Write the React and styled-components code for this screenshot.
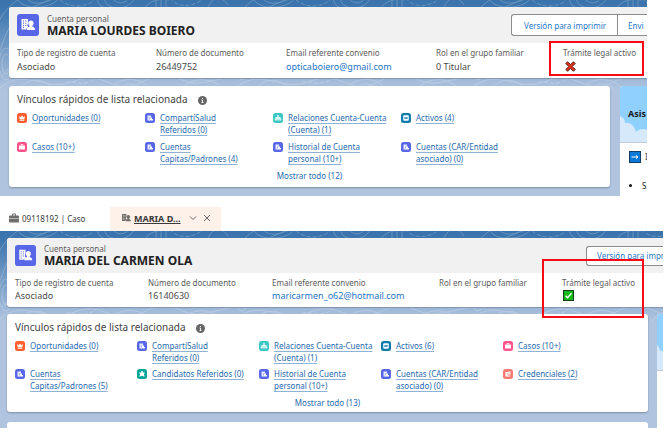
import React from "react";
import styled, { createGlobalStyle } from "styled-components";

const GlobalStyle = createGlobalStyle`
  *, *::before, *::after { box-sizing: border-box; }
  body {
    margin: 0;
    background: #fff;
    font-family: "Noto Sans", "Open Sans", sans-serif;
    font-size: 9px;
    color: #4a4a4a;
  }
`;

const Page = styled.main`
  display: flex;
  flex-direction: column;
`;

const Workspace = styled.section`
  position: relative;
  isolation: isolate;
  overflow: hidden;
  display: flex;
  flex-direction: column;
  gap: ${(p) => (p.$compact ? 7 : 8)}px;
  margin-right: ${(p) => (p.$compact ? 2 : 18)}px;
  padding: 7px 0 0 ${(p) => (p.$compact ? 7 : 9)}px;
  background: linear-gradient(#3a73ac 0, #3f77af 10px, #b0c4df 90px);
`;

const Contours = styled.svg`
  position: absolute;
  inset: 0;
  z-index: -1;
  width: 100%;
  height: 100px;
  fill: none;
  stroke: #fff;
  opacity: 0.22;
`;

const RecordCard = styled.article`
  border-radius: 3px 0 0 3px;
  background: #fff;
  box-shadow: 0 1px 1px #8195b0;
`;

const RecordHeader = styled.header`
  display: flex;
  align-items: center;
  gap: 8px;
  min-height: ${(p) => (p.$compact ? 35 : 36)}px;
  padding-left: 8px;
  border-radius: 3px 0 0 0;
  background: #f1f1f1;
`;

const Heading = styled.div`
  flex: 1;
  min-width: 0;
`;

const Eyebrow = styled.p`
  margin: 0;
  font-size: 8px;
  line-height: 11px;
  color: #5c5c5c;
  white-space: nowrap;
`;

const RecordName = styled.h1`
  margin: 0;
  font-size: 12px;
  line-height: 14px;
  font-weight: 700;
  color: #222;
  white-space: nowrap;
`;

const Actions = styled.div`
  display: flex;
  flex: none;
  overflow: hidden;
  width: ${(p) => (p.$compact ? 77 : 136)}px;
  border: 1px solid #8c8c8c;
  border-right: 0;
  border-radius: 3px 0 0 3px;
  background: #fff;
`;

const ActionButton = styled.button`
  flex: none;
  height: ${(p) => (p.$compact ? 18 : 20)}px;
  padding: 0 0 0 10px;
  border: 0;
  background: transparent;
  font: inherit;
  font-size: 8px;
  color: #1f78c8;
  white-space: nowrap;
  &:not(:last-child) {
    padding-right: 11px;
    padding-left: 12px;
    border-right: 1px solid #8c8c8c;
  }
`;

const Fields = styled.dl`
  display: grid;
  grid-template-columns: ${(p) => (p.$compact ? "133fr 124fr 167fr 123fr 101fr" : "139fr 130fr 150fr 127fr 84fr")};
  margin: 0;
  padding: 4px 0 5px 8px;
`;

const Field = styled.div`
  position: relative;
  min-width: 0;
  white-space: nowrap;
`;

const FieldLabel = styled.dt`
  font-size: 8px;
  line-height: 12px;
  color: #5c5c5c;
`;

const FieldValue = styled.dd`
  display: flex;
  align-items: center;
  height: ${(p) => (p.$compact ? 13 : 14)}px;
  margin: 0;
  font-size: 9px;
`;

const MailLink = styled.a`
  color: #2474c4;
  text-decoration: none;
`;

const Highlight = styled.span`
  position: absolute;
  z-index: 2;
  inset: ${(p) => (p.$compact ? "-18px 19px -16px -20px" : "-6px 3px -3px -14px")};
  border: 2px solid #f60b14;
`;

const MarkSlot = styled.span`
  padding-left: ${(p) => (p.$inset ? 2 : 1)}px;
`;

const Body = styled.div`
  display: grid;
  grid-template-columns: minmax(0, 1fr) ${(p) => (p.$compact ? 6 : 27)}px;
  column-gap: ${(p) => (p.$compact ? 9 : 10)}px;
`;

const MainColumn = styled.div`
  display: flex;
  flex-direction: column;
  gap: 10px;
  padding-bottom: ${(p) => (p.$compact ? 0 : 9)}px;
`;

const LinksCard = styled.section`
  padding: ${(p) => (p.$compact ? "5px 8px 3px" : "5px 8px 5px")};
  border-radius: 3px;
  background: #fff;
  box-shadow: 0 1px 2px #7f8da3;
`;

const NextCard = styled.section`
  height: 6px;
  border-radius: 3px 3px 0 0;
  background: #fff;
`;

const CardTitle = styled.h2`
  display: flex;
  align-items: center;
  gap: 10px;
  margin: 0 0 5px;
  font-size: 10px;
  line-height: 16px;
  font-weight: 400;
  color: #444;
  svg { margin-top: 2px; }
`;

const LinkGrid = styled.ul`
  display: grid;
  grid-template-columns: ${(p) => (p.$compact ? "repeat(4, 122fr) 137fr" : "repeat(3, 128fr) 201fr")};
  grid-auto-rows: minmax(24px, auto);
  row-gap: ${(p) => (p.$compact ? 4 : 5)}px;
  margin: 0;
  padding: 0;
  list-style: none;
`;

const LinkItem = styled.li`
  display: flex;
  gap: 5px;
  line-height: 12px;
  svg { margin-top: 1px; }
`;

const RelatedLink = styled.a`
  font-size: 8px;
  color: #276bb0;
  text-decoration: underline 1px #8fb3d8;
  text-decoration-skip-ink: none;
  text-underline-offset: 2px;
  white-space: pre;
`;

const ShowAll = styled.a`
  display: block;
  margin-top: 5px;
  font-size: 8px;
  line-height: 12px;
  text-align: center;
  color: #276bb0;
  text-decoration: none;
`;

const Assistant = styled.aside`
  overflow: hidden;
  border-radius: 3px 0 0 0;
  background: #fff;
`;

const Sky = styled.div`
  display: grid;
  height: 57px;
  align-items: center;
  border-bottom: 1px solid #c3cbd5;
  background: #8fd0ff;
  > * { grid-area: 1 / 1; }
  svg { align-self: end; }
`;

const AssistantTitle = styled.h2`
  z-index: 1;
  margin: 0 0 0 8px;
  font-size: 9px;
  line-height: 14px;
  color: #181818;
`;

const AssistantRow = styled.div`
  display: flex;
  align-items: center;
  gap: 4px;
  padding: 8px 0 0 9px;
  font-size: 8px;
  line-height: 12px;
`;

const Bullets = styled.ul`
  margin: 16px 0 0;
  padding-left: 22px;
  font-size: 8px;
  line-height: 14px;
  color: #181818;
`;

const TabBar = styled.nav`
  display: flex;
  margin-top: 11px;
  height: 24px;
`;

const Tab = styled.div`
  display: flex;
  align-items: center;
  width: ${(p) => (p.$active ? 111 : 110)}px;
  padding: 0 0 2px ${(p) => (p.$active ? 11 : 9)}px;
  gap: 3px;
  background: ${(p) => (p.$active ? "#fdf1ea" : "#fff")};
`;

const TabLink = styled.a`
  font-size: ${(p) => (p.$active ? 9 : 8)}px;
  font-weight: ${(p) => (p.$active ? 700 : 400)};
  color: #3a3a3a;
  text-decoration: ${(p) => (p.$active ? "underline" : "none")};
  white-space: nowrap;
`;

const TabTools = styled.div`
  display: flex;
  gap: 6px;
  margin: 0 10px 0 auto;
`;

const IconButton = styled.button`
  display: flex;
  padding: 0;
  border: 0;
  background: none;
  color: #666;
`;

const Icon = styled.svg`
  flex: none;
  display: block;
`;

function PersonBuilding({ size, color = "#fff", hole = "#5867e8", boxed }) {
  return (
    <Icon width={size} height={size} viewBox={boxed ? "0 0 22 22" : "3 4 15 14"} aria-hidden="true">
      {boxed && <rect width="22" height="22" rx="3" fill={hole} />}
      <path fill={color} d="M4.500 5h6.500v4.500c-1 1.500-.5 3 .4 3.800-1.400.6-2.300 1.200-2.500 2.200H4.500z" />
      <path stroke={hole} strokeWidth="1" strokeDasharray="1.100 1.100" fill="none" d="M6.500 6.500v8M8.800 6.500v6" />
      <path fill={color} d="M14 6.400c1.600 0 2.600 1.100 2.600 2.700 0 1.100-.5 2-1.200 2.700-.3.400-.1.800.3 1 1.200.5 2.200.9 2.200 2.200v.9H9.700V15c0-1.300 1.200-1.700 2.500-2.200.5-.2.600-.6.300-1-.7-.7-1.200-1.600-1.200-2.700 0-1.600 1.100-2.700 2.700-2.700z" />
    </Icon>
  );
}

const glyphs = {
  opportunity: ["#ff5d2d", <path key="a" fill="#fff" d="M4 6l3 2.500L10 5l3 3.500L16 6l-1.500 7h-9zM5.500 14h9v1.500h-9z" />],
  person: ["#5867e8", <g key="a" fill="#fff"><path d="M5 5h7v4H9v6H5z" opacity=".85" /><path d="M10 9h4v3h2v3H8v-2h2z" /></g>],
  relation: ["#3bc8c4", <path key="a" fill="#fff" d="M8.500 4h3v4H15v3h1.500v4h-4v-3.500h-1V15h-3v-3.500h-1V15h-4v-4H5V8h3.500z" opacity=".85" />],
  asset: ["#107cad", <g key="a"><rect x="4.500" y="4.500" width="11" height="11" rx="2" fill="#fff" /><path d="M7 8h6v4H7z" fill="#107cad" /><path d="M8 10h4" stroke="#fff" /></g>],
  cases: ["#ff538a", <g key="a"><rect x="4" y="7" width="12" height="8" rx="1" fill="#fff" /><path d="M8 7V5h4v2" stroke="#fff" strokeWidth="1.500" fill="none" /></g>],
  candidate: ["#06a59a", <path key="a" fill="#fff" d="M8.500 4h3v3H16l-2 3 1 5.500-5-2-5 2L6 10 4 7h4.500z" />],
  credential: ["#f77b73", <g key="a"><path fill="#fff" d="M5 6h6v2H9v5h5v2H5zM11 5h4v6h-5V8z" /><path d="M12 7v3" stroke="#f77b73" /></g>],
};

function Badge({ kind }) {
  const [color, glyph] = glyphs[kind];
  return (
    <Icon width="10" height="10" viewBox="0 0 20 20" aria-hidden="true">
      <rect width="20" height="20" rx="5" fill={color} />
      {glyph}
    </Icon>
  );
}

function InfoIcon() {
  return (
    <Icon width="9" height="9" viewBox="0 0 18 18" aria-label="Información">
      <circle cx="9" cy="9" r="9" fill="#666" />
      <path d="M9 4v2M7 8h2v5M7 13h4" stroke="#fff" strokeWidth="1.800" fill="none" />
    </Icon>
  );
}

function CrossMark() {
  return (
    <Icon width="11" height="11" viewBox="0 0 22 22" aria-label="No">
      <path fill="#e5341d" stroke="#43170f" strokeWidth="1.800" d="M5 1.500l6 5.500 6-5.500 3.500 3.500-6 6 6 6-3.500 3.500-6-5.500-6 5.500L1.500 17l6-6-6-6z" />
    </Icon>
  );
}

function CheckMark() {
  return (
    <Icon width="11" height="11" viewBox="0 0 22 22" aria-label="Sí">
      <rect x="1" y="1" width="20" height="20" fill="#13b91a" stroke="#143c16" strokeWidth="2" />
      <path d="M5 11.500l4 4 8-9" stroke="#fff" strokeWidth="2.500" fill="none" />
    </Icon>
  );
}

function ContourLines({ id }) {
  return (
    <Contours aria-hidden="true">
      <defs>
        <pattern id={id} width="236" height="100" patternUnits="userSpaceOnUse">
          <path d="M-8 40C-2 15 12 0 30-6M-5 60C8 38 2 18 45 2S70 6 92-4M2 76C28 50 0 44 16 28M18 0c8 12 38 8 42-4M26-2c6 8 22 6 26-2" />
          <path strokeDasharray="4 2" d="M60 0c12 10 28 6 34 0M170-2c8 12 26 8 34 0M66 82c12 0 18 4 30-3" />
          <path d="M98-4c-2 8 4 12 10 12M104-4c0 8 6 12 14 12s14-4 18-12M112-4c2 8 14 10 18 0M145 8c4-7 14-10 24-8M156 10V-2M161 10V-2M166 10V-2M208 9c2-12 14-14 20-4" />
          <path d="M0 88c16-14 28-8 50-4s30-12 52-4 24 10 44 0 30-2 42 2 32-4 48-6M20 90c5-12 24-14 34 0M110 90c6-14 34-14 40 0M120 90c4-8 18-8 22 0M180 90c12-14 30-12 40-4" />
          <ellipse cx="6" cy="64" rx="7" ry="16" />
          <ellipse cx="6" cy="64" rx="4" ry="10" />
        </pattern>
      </defs>
      <rect width="100%" height="100%" fill={`url(#${id})`} stroke="none" />
    </Contours>
  );
}

function Record({ id, compact, name, fields, actions, links, total, assistant, next }) {
  const c = compact;
  return (
    <Workspace $compact={c}>
      <ContourLines id={id} />
      <RecordCard>
        <RecordHeader $compact={c}>
          <PersonBuilding size={c ? 21 : 22} boxed />
          <Heading>
            <Eyebrow>Cuenta personal</Eyebrow>
            <RecordName>{name}</RecordName>
          </Heading>
          <Actions $compact={c}>
            {actions.map((a) => <ActionButton key={a} type="button" $compact={c}>{a}</ActionButton>)}
          </Actions>
        </RecordHeader>
        <Fields $compact={c}>
          {fields.map(({ label, value, highlight }) => (
            <Field key={label}>
              <FieldLabel>{label}</FieldLabel>
              <FieldValue $compact={c}>{value}</FieldValue>
              {highlight && <Highlight $compact={c} />}
            </Field>
          ))}
        </Fields>
      </RecordCard>
      <Body $compact={c}>
        <MainColumn $compact={c}>
          <LinksCard $compact={c}>
            <CardTitle>Vínculos rápidos de lista relacionada <InfoIcon /></CardTitle>
            <LinkGrid $compact={c}>
              {links.map(([kind, text]) => (
                <LinkItem key={text}>
                  <Badge kind={kind} />
                  <RelatedLink href="#">{text}</RelatedLink>
                </LinkItem>
              ))}
            </LinkGrid>
            <ShowAll href="#">{`Mostrar todo (${total})`}</ShowAll>
          </LinksCard>
          {next && <NextCard />}
        </MainColumn>
        {assistant}
      </Body>
    </Workspace>
  );
}

function SkyHeader({ children, offset = 0 }) {
  return (
    <Sky>
      <Icon width="27" height="27" viewBox={`${offset} 0 27 27`} aria-hidden="true">
        <path fill="#d5e9fb" d="M0 1c3 1 5 4 5 7 5-1 9 2 11 9 3-3 7-4 11-2v12H0z" />
      </Icon>
      {children}
    </Sky>
  );
}

const firstFields = [
  { label: "Tipo de registro de cuenta", value: "Asociado" },
  { label: "Número de documento", value: "26449752" },
  { label: "Email referente convenio", value: <MailLink href="mailto:opticaboiero@gmail.com">opticaboiero@gmail.com</MailLink> },
  { label: "Rol en el grupo familiar", value: "0 Titular" },
  { label: "Trámite legal activo", value: <MarkSlot $inset><CrossMark /></MarkSlot>, highlight: true },
];

const secondFields = [
  { label: "Tipo de registro de cuenta", value: "Asociado" },
  { label: "Número de documento", value: "16140630" },
  { label: "Email referente convenio", value: <MailLink href="mailto:maricarmen_o62@hotmail.com">maricarmen_o62@hotmail.com</MailLink> },
  { label: "Rol en el grupo familiar", value: null },
  { label: "Trámite legal activo", value: <MarkSlot><CheckMark /></MarkSlot>, highlight: true },
];

const firstLinks = [
  ["opportunity", "Oportunidades (0)"],
  ["person", "CompartíSalud\nReferidos (0)"],
  ["relation", "Relaciones Cuenta-Cuenta\n(Cuenta) (1)"],
  ["asset", "Activos (4)"],
  ["cases", "Casos (10+)"],
  ["person", "Cuentas\nCapitas/Padrones (4)"],
  ["person", "Historial de Cuenta\npersonal (10+)"],
  ["person", "Cuentas (CAR/Entidad\nasociado) (0)"],
];

const secondLinks = [
  ["opportunity", "Oportunidades (0)"],
  ["person", "CompartíSalud\nReferidos (0)"],
  ["relation", "Relaciones Cuenta-Cuenta\n(Cuenta) (1)"],
  ["asset", "Activos (6)"],
  ["cases", "Casos (10+)"],
  ["person", "Cuentas\nCapitas/Padrones (5)"],
  ["candidate", "Candidatos Referidos (0)"],
  ["person", "Historial de Cuenta\npersonal (10+)"],
  ["person", "Cuentas (CAR/Entidad\nasociado) (0)"],
  ["credential", "Credenciales (2)"],
];

export default function App() {
  return (
    <Page>
      <GlobalStyle />
      <Record
        id="contours-first"
        name="MARIA LOURDES BOIERO"
        fields={firstFields}
        actions={["Versión para imprimir", "Envi"]}
        links={firstLinks}
        total={12}
        assistant={
          <Assistant>
            <SkyHeader><AssistantTitle>Asis</AssistantTitle></SkyHeader>
            <AssistantRow>
              <Icon width="12" height="12" viewBox="0 0 24 24" aria-hidden="true">
                <rect x="1" y="1" width="22" height="22" fill="#0a78d6" stroke="#123c66" strokeWidth="2" />
                <path d="M5 12h12M14 9l4 3-4 3" stroke="#fff" strokeWidth="2" fill="none" />
              </Icon>
              I
            </AssistantRow>
            <Bullets><li>S</li></Bullets>
          </Assistant>
        }
      />
      <TabBar>
        <Tab>
          <Icon width="10" height="10" viewBox="0 0 20 20" aria-hidden="true">
            <path fill="#706e6b" d="M6 5V3q0-2 2-2h4q2 0 2 2v2h4q2 0 2 2v3H0V7q0-2 2-2zm2 0h4V3H8zM0 11h20v6q0 2-2 2H2q-2 0-2-2z" />
          </Icon>
          <TabLink href="#">09118192 | Caso</TabLink>
        </Tab>
        <Tab $active>
          <PersonBuilding size={10} color="#706e6b" hole="#fdf1ea" />
          <TabLink href="#" $active>MARIA D...</TabLink>
          <TabTools>
            <IconButton type="button" aria-label="Acciones">
              <Icon width="8" height="8" viewBox="0 0 8 8"><path d="M1 2.500l3 3 3-3" fill="none" stroke="currentColor" /></Icon>
            </IconButton>
            <IconButton type="button" aria-label="Cerrar">
              <Icon width="8" height="8" viewBox="0 0 8 8"><path d="M1 1l6 6M7 1L1 7" fill="none" stroke="currentColor" /></Icon>
            </IconButton>
          </TabTools>
        </Tab>
      </TabBar>
      <Record
        id="contours-second"
        compact
        next
        name="MARIA DEL CARMEN OLA"
        fields={secondFields}
        actions={["Versión para impr"]}
        links={secondLinks}
        total={13}
        assistant={<Assistant><SkyHeader offset={2} /></Assistant>}
      />
    </Page>
  );
}
